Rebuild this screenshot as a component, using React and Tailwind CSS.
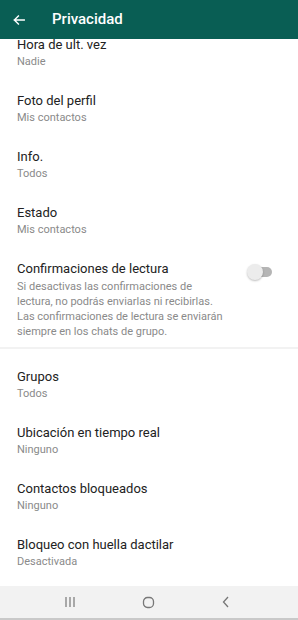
import React, { useState } from "react";

const top = [
  { title: "Hora de ult. vez", sub: "Nadie" },
  { title: "Foto del perfil", sub: "Mis contactos" },
  { title: "Info.", sub: "Todos" },
  { title: "Estado", sub: "Mis contactos" },
];

const bottom = [
  { title: "Grupos", sub: "Todos" },
  { title: "Ubicación en tiempo real", sub: "Ninguno" },
  { title: "Contactos bloqueados", sub: "Ninguno" },
  { title: "Bloqueo con huella dactilar", sub: "Desactivada" },
];

function Row({ title, sub }) {
  return (
    <div className="px-[17px] py-[11px] h-[56px]">
      <div className="text-[13px] leading-[18px] text-[#222]">{title}</div>
      <div className="text-[11px] leading-[16px] text-[#8a8a8a]">{sub}</div>
    </div>
  );
}

export default function App() {
  const [receipts, setReceipts] = useState(false);

  return (
    <div
      className="w-[298px] h-[620px] flex flex-col bg-white overflow-hidden"
      style={{ fontFamily: "Roboto, 'Noto Sans', sans-serif" }}
    >
      {/* HEADER */}
      <div className="h-[39px] shrink-0 bg-[#095e54] flex items-center text-white relative z-10">
        <svg width="14" height="14" viewBox="0 0 24 24" className="ml-[12px]" fill="none" stroke="white" strokeWidth="2.4" strokeLinecap="square">
          <path d="M21 12H4M11 5l-7 7 7 7" />
        </svg>
        <div className="ml-[26px] text-[15px] font-medium">Privacidad</div>
      </div>

      {/* LIST */}
      <div className="flex-1 overflow-hidden">
        <div className="-mt-[14px]">
          {top.map((r) => (
            <Row key={r.title} {...r} />
          ))}

          <div className="px-[17px] pt-[11px] pb-[8px] flex">
            <div className="flex-1 pr-[20px]">
              <div className="text-[13px] leading-[18px] text-[#222]">Confirmaciones de lectura</div>
              <div className="text-[11px] leading-[15px] text-[#8a8a8a] mt-[1px]">
                Si desactivas las confirmaciones de lectura, no podrás enviarlas ni recibirlas. Las confirmaciones de lectura se enviarán siempre en los chats de grupo.
              </div>
            </div>
            <button
              onClick={() => setReceipts(!receipts)}
              className="relative w-[25px] h-[16px] mt-[4px] mr-[9px] shrink-0"
            >
              <span className="absolute left-[3px] right-0 top-[3px] h-[10px] rounded-full bg-[#b5b5b5]" />
              <span className="absolute left-0 top-0 w-[16px] h-[16px] rounded-full bg-[#ececec] shadow-[0_1px_2px_rgba(0,0,0,0.25)]" />
            </button>
          </div>

          <div className="h-[2px] bg-[#f2f2f2]" />

          <div className="pt-[8px]">
            {bottom.map((r) => (
              <Row key={r.title} {...r} />
            ))}
          </div>
        </div>
      </div>

      {/* NAV BAR */}
      <div className="h-[34px] shrink-0 bg-[#f2f2f2] border-b-[2px] border-[#c9c9c9] flex items-center pl-[60px] gap-[58px]">
        <div className="w-[20px] flex justify-center">
          <svg width="12" height="12" viewBox="0 0 12 12" stroke="#777" strokeWidth="1.2">
            <path d="M2 1v10M6 1v10M10 1v10" />
          </svg>
        </div>
        <div className="w-[20px] flex justify-center">
          <svg width="13" height="13" viewBox="0 0 13 13" fill="none" stroke="#777" strokeWidth="1.3">
            <rect x="1.5" y="1.5" width="10" height="10" rx="4" />
          </svg>
        </div>
        <div className="w-[20px] flex justify-center">
          <svg width="10" height="12" viewBox="0 0 10 12" fill="none" stroke="#777" strokeWidth="1.3">
            <path d="M7 1L2.5 6 7 11" />
          </svg>
        </div>
      </div>
    </div>
  );
}
